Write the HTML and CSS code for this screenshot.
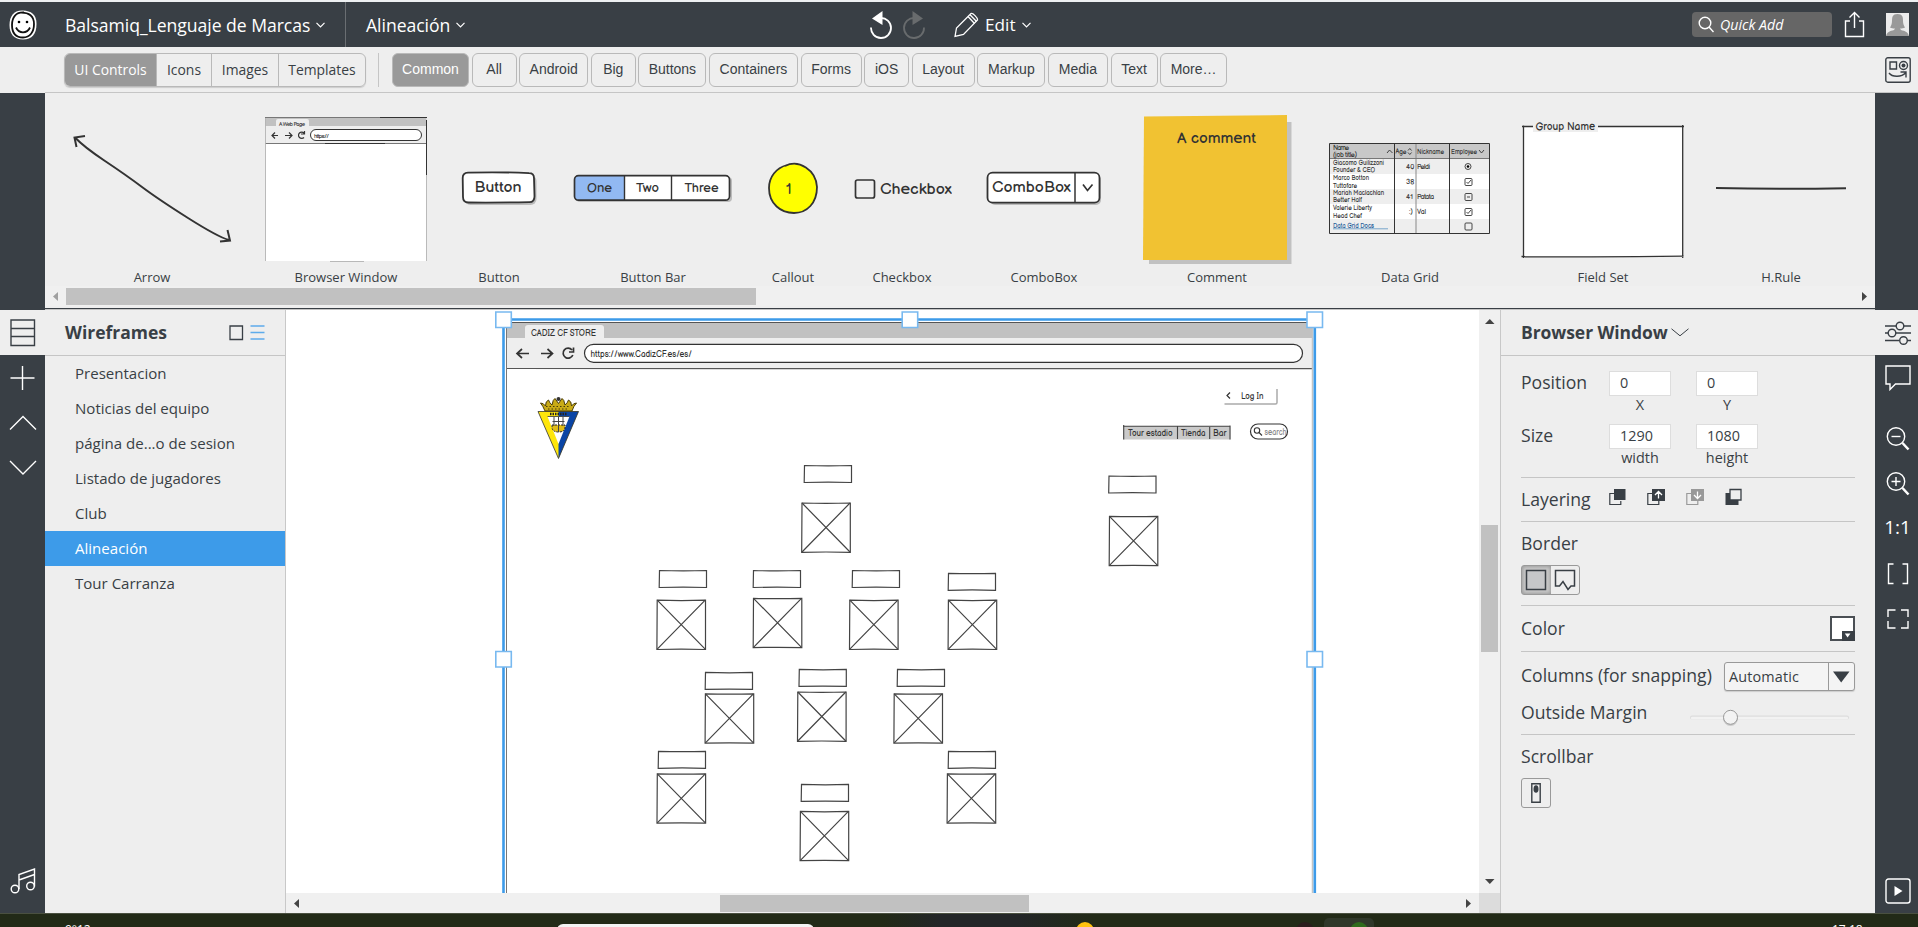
FILE: index.html
```html
<!DOCTYPE html>
<html lang="es">
<head>
<meta charset="utf-8">
<title>Balsamiq_Lenguaje de Marcas</title>
<link rel="stylesheet" href="styles.css">
</head>
<body>
<div class="app">
  <header class="topbar">
    <svg class="logo" width="30" height="32" viewBox="0 0 30 32"><path d="M15 1.500C6 1 1.500 7 1.500 16s4.500 14.500 13.500 14.500S28.500 25 28.500 15 23 2 15 1.500z" fill="#fff"/><path d="M16 3.500C8 3 4 8 4 16s4 12.500 11 12.500S26 23 26 15 21 3.500 13 3.600" fill="none" stroke="#111" stroke-width="1.800"/><path d="M8 18.500c3 6.500 11 6.500 14 0" fill="none" stroke="#111" stroke-width="1.800"/><circle cx="11" cy="13" r="1.300"/><circle cx="19" cy="13" r="1.300"/></svg>
    <div class="menu project"><span>Balsamiq_Lenguaje de Marcas</span><svg width="9" height="6" viewBox="0 0 9 6"><path d="M.5.8l4 4 4-4"/></svg></div>
    <div class="menu board"><span>Alineación</span><svg width="9" height="6" viewBox="0 0 9 6"><path d="M.5.8l4 4 4-4"/></svg></div>
    <div class="tools">
      <svg width="56" height="30" viewBox="0 0 56 30"><g fill="none" stroke="#fff" stroke-width="1.800"><path d="M1 17.500a10 10 0 1 0 9.500-9.500"/></g><path d="M2 8.500L12.500 1V15z" fill="#fff"/><g fill="none" stroke="#686b6d" stroke-width="1.800"><path d="M54 17.500a10 10 0 1 1-9.500-9.500"/></g><path d="M53 8.500L42.500 1V15z" fill="#686b6d"/></svg>
      <svg class="pencil" width="25" height="26" viewBox="0 0 25 26"><g fill="none" stroke="#fff" stroke-width="1.300"><path d="M1 24.500l1.500-8.500L17 1.500c1.500-1 7 4.500 6.500 6.500L9.500 22.500z"/><path d="M14 4.500l6.500 7M16 2.700l6.500 6.800"/></g></svg>
      <div class="menu edit"><span>Edit</span><svg width="9" height="6" viewBox="0 0 9 6"><path d="M.5.8l4 4 4-4"/></svg></div>
    </div>
    <div class="account">
      <div class="quick"><svg width="16" height="17" viewBox="0 0 16 17"><circle cx="7" cy="7" r="5.800"/><path d="M11 11l4.500 5"/></svg><span>Quick Add</span></div>
      <svg class="share" width="22" height="28" viewBox="0 0 22 28"><path d="M6 10H1.500v15.500h18V10H15M10.500 17V2M5.500 6.500l5-5 5 5"/></svg>
      <svg class="avatar" width="23" height="23" viewBox="0 0 23 23"><path fill="#ececec" d="M0 0h23v23H0z"/><path fill="#999" d="M11.500 1C6.500 1 6 4 6 8c0 3-1 5-2 6.500 2 1 4 1.200 5 1L8 17c-4 1-7 2-8 6h23c-1-4-4-5-8-6l-1-1.500c1 .2 3 0 5-1C18 13 17 11 17 8c0-4-.5-7-5.500-7z"/></svg>
    </div>
  </header>

  <nav class="library">
    <div class="segments"><span class="on">UI Controls</span><span>Icons</span><span>Images</span><span>Templates</span></div>
    <i class="vline"></i>
    <div class="cats"><span class="c77 on">Common</span><span class="c45">All</span><span class="c69">Android</span><span class="c45">Big</span><span class="c68">Buttons</span><span class="c89">Containers</span><span class="c61">Forms</span><span class="c45">iOS</span><span class="c63">Layout</span><span class="c68">Markup</span><span class="c60">Media</span><span class="c47">Text</span><span class="c67">More…</span></div>
    <svg class="toggle" width="26" height="26" viewBox="0 0 26 26"><g fill="none" stroke="#393f45" stroke-width="1.400"><rect x=".8" y=".8" width="24.400" height="24.400" rx="2"/><path d="M5 5h6.500v7H5z"/><circle cx="18.500" cy="8.500" r="4"/><path d="M4 16c3 4 12 5 17-.5M15.500 15H21v5.500"/></g><circle cx="18.500" cy="8.500" r="2" fill="#393f45"/></svg>
  </nav>

  <section class="shelf">
    <div class="items">
      <figure class="i-arrow"><svg width="162" height="172" viewBox="71 98 162 172"><path d="M75 137.500Q84 147 105 161T142 187T188 218T229 240M85 136l-10.500 1.500 2 9.500M220 241.500l10-1-2.500-10.500" fill="none" stroke="#333" stroke-width="2"/></svg><figcaption>Arrow</figcaption></figure>
      <figure class="i-browser"><svg width="164" height="172" viewBox="264 98 164 172"><path fill="#fff" d="M265.500 118h161v143h-161z"/><path fill="#c1c1c1" d="M265.500 118h161v8h-161z"/><path fill="#eee" d="M265.500 126h161v17h-161z"/><path fill="#eee" d="M276 127v-6q0-2 2-2h29q2 0 2 2v6z"/><path d="M265 117.500h162M265.500 143.500h161" stroke="#777"/><path d="M380 117.500h47M325 143.500h60M426.500 120v55" stroke="#333"/><path d="M265.500 118v143M426.500 175v86M330 261.500h34" stroke="#aaa" stroke-width=".8"/><rect x="310.500" y="129.500" width="111" height="11" rx="5.500" fill="#fff" stroke="#333"/><g fill="none" stroke="#333" stroke-width="1.200"><path d="M278 135.500h-6m3-3l-3 3 3 3M285 135.500h7m-3-3l3 3-3 3M304 133a3.200 3.200 0 1 0 0 4.500M304.500 131v3H301"/></g><text x="279" y="126" font-size="5.500" textLength="26">A Web Page</text><text x="314" y="137.500" font-size="6" textLength="15">https://</text></svg><figcaption>Browser Window</figcaption></figure>
      <figure class="i-button"><svg width="76" height="172" viewBox="461 98 76 172"><rect x="464.500" y="175" width="72" height="30" rx="6" fill="#bbb"/><path d="M468 172.700q30-1 61 .5 5 0 5 5l.5 18q0 6-5 6-31 .5-61 .3-5.500 0-5.500-5.500l-.3-19q0-5 5.300-5.300z" fill="#fff" stroke="#333" stroke-width="1.800"/><text x="474.500" y="191.500" font-size="15" textLength="47" lengthAdjust="spacingAndGlyphs">Button</text></svg><figcaption>Button</figcaption></figure>
      <figure class="i-bar"><svg width="160" height="172" viewBox="573 98 160 172"><rect x="576" y="177" width="156" height="25" rx="4" fill="#bbb"/><rect x="574.500" y="175.700" width="155" height="24.500" rx="4" fill="#fff"/><path fill="#92b9f2" d="M625 175.700h-46q-4.500 0-4.500 4.500v15.500q0 4.500 4.500 4.500h46z"/><rect x="574.500" y="175.700" width="155" height="24.500" rx="4" fill="none" stroke="#333" stroke-width="1.700"/><path d="M624.500 176v24M671.500 176v24" stroke="#333" stroke-width="1.400"/><g font-size="12.500"><text x="587" y="192" textLength="25" lengthAdjust="spacingAndGlyphs">One</text><text x="636" y="192" textLength="23" lengthAdjust="spacingAndGlyphs">Two</text><text x="684.500" y="192" textLength="34" lengthAdjust="spacingAndGlyphs">Three</text></g></svg><figcaption>Button Bar</figcaption></figure>
      <figure class="i-callout"><svg width="52" height="172" viewBox="767 98 52 172"><path d="M785 166c14-7 31 4 32 21 0 16-10 26-23 26s-25-9-25-25c0-11 7-20 18-23" fill="#ff0" stroke="#333" stroke-width="1.800"/><text x="786" y="194" font-size="14">1</text></svg><figcaption>Callout</figcaption></figure>
      <figure class="i-check"><svg width="100" height="172" viewBox="852 98 100 172"><rect x="855.500" y="180" width="19" height="18" rx="2" fill="none" stroke="#333" stroke-width="1.700"/><text x="880" y="194" font-size="14.500" textLength="72" lengthAdjust="spacingAndGlyphs">Checkbox</text></svg><figcaption>Checkbox</figcaption></figure>
      <figure class="i-combo"><svg width="116" height="172" viewBox="986 98 116 172"><rect x="990" y="175" width="111" height="30" rx="5" fill="#bbb"/><rect x="987.500" y="172.700" width="112" height="30" rx="5" fill="#fff" stroke="#333" stroke-width="1.800"/><path d="M1075 173v29" stroke="#333" stroke-width="1.500"/><path d="M1083 184.500l4.500 6 5-6" fill="none" stroke="#333" stroke-width="1.700"/><text x="992" y="192" font-size="15" textLength="79" lengthAdjust="spacingAndGlyphs">ComboBox</text></svg><figcaption>ComboBox</figcaption></figure>
      <figure class="i-comment"><svg width="150" height="172" viewBox="1142 98 150 172"><path fill="#c1c1c1" d="M1149 122h142.500v142H1149z"/><path fill="#f1c232" d="M1144 116.500l143-1.500v145h-144z"/><text x="1177" y="142.500" font-size="14" textLength="79" lengthAdjust="spacingAndGlyphs">A comment</text></svg><figcaption>Comment</figcaption></figure>
      <figure class="i-grid"><svg width="162" height="172" viewBox="1329 98 162 172"><path fill="#eee" d="M1329.500 143.500h160v90h-160z"/><path fill="#c8c8c8" d="M1329.500 143.500h160v15h-160z"/><path fill="#fff" d="M1329.500 174h160v15h-160zM1329.500 204h160v15h-160z"/><path d="M1416 144v90" stroke="#888"/><path d="M1329.500 158.500h160" stroke="#777"/><path d="M1329.500 143.500h160v90h-160zM1394.500 143.500v90M1449.500 143.500v90" fill="none" stroke="#333"/><g font-size="6.800"><text x="1333" y="149.500" textLength="16">Name</text><text x="1333" y="157" textLength="24">(job title)</text><text x="1333" y="165" textLength="51" lengthAdjust="spacingAndGlyphs">Giacomo Guilizzoni</text><text x="1333" y="172" textLength="42" lengthAdjust="spacingAndGlyphs">Founder &amp; CEO</text><text x="1333" y="180" textLength="36" lengthAdjust="spacingAndGlyphs">Marco Botton</text><text x="1333" y="187.500" textLength="24" lengthAdjust="spacingAndGlyphs">Tuttofare</text><text x="1333" y="195" textLength="51" lengthAdjust="spacingAndGlyphs">Mariah Maclachlan</text><text x="1333" y="202" textLength="29" lengthAdjust="spacingAndGlyphs">Better Half</text><text x="1333" y="210" textLength="39" lengthAdjust="spacingAndGlyphs">Valerie Liberty</text><text x="1333" y="217.500" textLength="29" lengthAdjust="spacingAndGlyphs">Head Chef</text><text class="link" x="1333" y="228" textLength="41" lengthAdjust="spacingAndGlyphs">Data Grid Docs</text><text x="1395.500" y="153.500" textLength="11" lengthAdjust="spacingAndGlyphs">Age</text><text x="1417" y="153.500" textLength="27" lengthAdjust="spacingAndGlyphs">Nickname</text><text x="1451" y="153.500" textLength="26" lengthAdjust="spacingAndGlyphs">Employee</text><text x="1406" y="168.500">40</text><text x="1406" y="183.500">38</text><text x="1406" y="198.500">41</text><text x="1409" y="214">:)</text><text x="1417" y="168.500" textLength="13">Peldi</text><text x="1417" y="198.500" textLength="17">Patata</text><text x="1417" y="214">Val</text></g><path d="M1333 228.800h55" stroke="#5b93c2" stroke-width=".8"/><g fill="none" stroke="#333" stroke-width=".9"><path d="M1387 153l2.500-3 3 3M1408 150.500l1.800-2 1.800 2M1408 152.500l1.800 2 1.800-2M1479 150l2.500 3 2.500-3"/><circle cx="1468" cy="166.500" r="3"/><rect x="1465" y="178.500" width="7" height="7" rx="1"/><rect x="1465" y="193.500" width="7" height="7" rx="1"/><rect x="1465" y="208.500" width="7" height="7" rx="1"/><rect x="1465" y="223" width="7" height="7" rx="1"/><path d="M1466.500 182l1.500 1.500 3-3.500M1467 197h3M1466.500 212l1.500 1.500 3-3.500"/></g><circle cx="1468" cy="166.500" r="1.300"/></svg><figcaption>Data Grid</figcaption></figure>
      <figure class="i-field"><svg width="164" height="172" viewBox="1521 98 164 172"><path fill="#fff" d="M1523.500 126.500h159v130h-159z"/><path d="M1523.500 125.500V258M1522 126.500h162M1682.700 125v133M1521.500 256.500q80 1 162-.3" fill="none" stroke="#333" stroke-width="1.300"/><path fill="#eee" d="M1533 122h65v10h-65z"/><text x="1535.500" y="129.500" font-size="10.500" textLength="59.500" lengthAdjust="spacingAndGlyphs">Group Name</text></svg><figcaption>Field Set</figcaption></figure>
      <figure class="i-rule"><svg width="132" height="172" viewBox="1715 98 132 172"><path d="M1716 188q64 1.500 130 .2" fill="none" stroke="#333" stroke-width="1.900"/></svg><figcaption>H.Rule</figcaption></figure>
    </div>
    <div class="hscroll shelf-scroll"><svg width="21" height="17" viewBox="0 0 21 17"><path d="M8 8.500L13 4v9z" fill="#a0a0a0"/></svg><i class="thumb"></i><svg class="end" width="21" height="17" viewBox="0 0 21 17"><path d="M13 8.500L8 4v9z" fill="#444"/></svg></div>
  </section>

  <main class="work">
    <aside class="rail left">
      <span class="slot on"><svg width="26" height="28" viewBox="0 0 26 28"><path d="M1 1h23.500v25.500H1zM1 9.500h23.500M1 17.500h23.500"/></svg></span>
      <span class="slot"><svg width="26" height="26" viewBox="0 0 26 26"><path d="M12.500 1v24M.5 13h24"/></svg></span>
      <span class="slot"><svg width="28" height="16" viewBox="0 0 28 16"><path d="M1 14.500L14 1.500l13 13"/></svg></span>
      <span class="slot"><svg width="28" height="16" viewBox="0 0 28 16"><path d="M1 1l13 13L27 1"/></svg></span>
      <span class="slot music"><svg width="26" height="26" viewBox="0 0 26 26"><path d="M9 21V6.500L24.500 1v17.500M9 12l15.500-5.500"/><circle cx="5" cy="21" r="3.800"/><circle cx="20.500" cy="18" r="3.800"/></svg></span>
    </aside>
    <section class="wires">
      <div class="wires-head"><h2>Wireframes</h2><svg width="36" height="16" viewBox="0 0 36 16"><path d="M1 1h12.500v13.500H1z" fill="none" stroke="#393f45" stroke-width="1.300"/><path d="M21.500 1h14M21.500 7.500h14M21.500 14h14" stroke="#5dabeb" stroke-width="1.400"/></svg></div>
      <ul><li>Presentacion</li><li>Noticias del equipo</li><li>página de...o de sesion</li><li>Listado de jugadores</li><li>Club</li><li class="on">Alineación</li><li>Tour Carranza</li></ul>
    </section>
    <section class="canvas">
      <svg class="sheet" width="1193" height="583" viewBox="286 310 1193 583">
        <defs>
          <g id="tag" fill="none" stroke="#444" stroke-width="1.200"><path d="M0 0Q24 .8 47 0V17Q24 16.300-.3 17Z"/></g>
          <g id="pic" fill="none" stroke="#444" stroke-width="1.200"><path d="M0 0Q24 .8 48.300 0V49.300Q24 48.700-.3 49.300Z"/><path d="M0 0L48 49M48 0L0 49"/></g>
        </defs>
        <path fill="#c1c1c1" d="M507 323h806v16H507z"/><path fill="#eee" d="M507 338h806v30H507z"/><path fill="#eee" d="M525 339v-11q0-3 3-3h73q3 0 3 3v11z"/>
        <path d="M507 322.500h805M507 368.500q200 .8 350 .2 200 1 455 0" fill="none" stroke="#555" stroke-width="1.200"/>
        <path d="M506.500 322v571" stroke="#777"/><path d="M1312.500 322v571" stroke="#c4c4c4" stroke-width="1.500"/>
        <rect x="584.500" y="344.300" width="718" height="18" rx="9" fill="#fff" stroke="#333" stroke-width="1.200"/>
        <g fill="none" stroke="#333" stroke-width="1.700"><path d="M529 353.500h-12M522 349l-5 4.500 5 4.500M541 353.500h12M547.500 349l5 4.500-5 4.500M572 350a5 5 0 1 0 .8 5M573.500 347.500v4.500H569"/></g>
        <text x="531" y="336" font-size="9.800" textLength="65" lengthAdjust="spacingAndGlyphs">CADIZ CF STORE</text>
        <text x="590.500" y="357" font-size="9.800" textLength="101.500" lengthAdjust="spacingAndGlyphs">https://www.CadizCF.es/es/</text>
        <g><path d="M538 411.500h40.500L558.500 458.500z" fill="#ffe60a"/><path d="M558.500 411.500h20L558.500 458.500z" fill="#0a45a5"/><path d="M547.500 416.500h22L558.500 444z" fill="#fff"/><path d="M538 411.500h40.500L558.500 458.500zM547.500 416.500h22" fill="none" stroke="#333" stroke-width=".8"/><path d="M552 425h13v2q0 5-6.500 5t-6.500-5z" fill="#e0bd18" stroke="#222" stroke-width="1" stroke-dasharray="2 1"/><path d="M554 417v9M558.500 417v15M563 417v9M552.500 421.500h12" stroke="#444"/><path d="M545 411q-2-5-4.500-8 3 0 5 3 0-5 3-6 1 3 3.500 5 1-6 3-6.500l3.500 5 3.500-5q2 .5 3 6.500 2.500-2 3.500-5 3 1 3 6 2-3 5-3-3 3-4.500 8z" fill="#c9ab16" stroke="#4a3d08" stroke-width="1"/><path d="M548 409h21M546 406.500l24 0" stroke="#4a3d08" stroke-dasharray="1.500 2"/><circle cx="558.500" cy="399" r="2" fill="#333"/><path d="M550 414h17" stroke="#222" stroke-width="2.500" stroke-dasharray="1.500 1"/></g>
        <path d="M1224.500 404h51q1.500 0 1.500-1.500V389" fill="none" stroke="#aaa" stroke-width="1.500"/><path d="M1230 392.500l-3 3 3 3" fill="none" stroke="#333" stroke-width="1.200"/><text x="1241" y="398.500" font-size="9.600" textLength="22.500" lengthAdjust="spacingAndGlyphs">Log In</text>
        <path fill="#cacaca" d="M1123.500 426h107v13.500h-107z"/><path d="M1123 426.300h107.500M1123.700 425v14.500M1177.500 426v13M1209.700 427v12M1230 425.500v14" fill="none" stroke="#444" stroke-width="1.100"/>
        <g font-size="9.800"><text x="1128" y="436" textLength="44.500" lengthAdjust="spacingAndGlyphs">Tour estadio</text><text x="1181" y="436" textLength="24.500" lengthAdjust="spacingAndGlyphs">Tienda</text><text x="1213" y="436" textLength="13.500" lengthAdjust="spacingAndGlyphs">Bar</text></g>
        <rect x="1250.500" y="424" width="37" height="15" rx="7.500" fill="#fff" stroke="#333" stroke-width="1.200"/><g fill="none" stroke="#333" stroke-width="1.100"><circle cx="1257" cy="430.500" r="2.700"/><path d="M1259 432.500l3 3"/></g><text class="hint" x="1264.500" y="434.500" font-size="8.600" textLength="22" lengthAdjust="spacingAndGlyphs">search</text>
        <use href="#tag" x="804.500" y="465.500"/><use href="#pic" x="802" y="503"/>
        <use href="#tag" x="1109" y="476"/><use href="#pic" x="1109.500" y="516.300"/>
        <use href="#tag" x="659.500" y="570.500"/><use href="#tag" x="753.500" y="570.500"/><use href="#tag" x="852.500" y="570.500"/><use href="#tag" x="948.500" y="573.300"/>
        <use href="#pic" x="657.200" y="600.200"/><use href="#pic" x="753.500" y="598.300"/><use href="#pic" x="849.800" y="600.200"/><use href="#pic" x="948.400" y="600.200"/>
        <use href="#tag" x="705.500" y="672.400"/><use href="#tag" x="799.300" y="669.400"/><use href="#tag" x="897.500" y="669.400"/>
        <use href="#pic" x="705.400" y="693.800"/><use href="#pic" x="797.800" y="692"/><use href="#pic" x="894.200" y="693.800"/>
        <use href="#tag" x="658.500" y="751.300"/><use href="#tag" x="801.500" y="784.400"/><use href="#tag" x="948.500" y="751.300"/>
        <use href="#pic" x="657.300" y="773.800"/><use href="#pic" x="800.400" y="811.400"/><use href="#pic" x="947.400" y="773.800"/>
        <path d="M503.500 893V319.500H1314.800V893" fill="none" stroke="#3d9be9" stroke-width="2.600"/>
        <g fill="#fff" stroke="#78b9f0" stroke-width="1.600"><path d="M495.800 312h15.500v15.500h-15.500zM902.200 312h15.500v15.500h-15.500zM1307 312h15.500v15.500h-15.500zM495.800 651.500h15.500V667h-15.500zM1307 651.500h15.500V667h-15.500z"/></g>
      </svg>
      <div class="vscroll"><svg width="21" height="21" viewBox="0 0 21 21"><path d="M6 14h9.500l-4.700-5z" fill="#444"/></svg><i class="thumb"></i><svg class="end" width="21" height="21" viewBox="0 0 21 21"><path d="M6 7h9.500l-4.700 5z" fill="#444"/></svg></div>
      <div class="hscroll"><svg width="21" height="20" viewBox="0 0 21 20"><path d="M8 10.500l5-4.500v9z" fill="#444"/></svg><i class="thumb"></i><svg class="end" width="21" height="20" viewBox="0 0 21 20"><path d="M13 10.500L8 6v9z" fill="#444"/></svg></div>
      <i class="corner"></i>
    </section>
    <section class="props">
      <div class="props-head"><h2>Browser Window</h2><svg width="18" height="9" viewBox="0 0 18 9"><path d="M.5.8L9 7.800l8.500-7" fill="none" stroke="#393f45"/></svg></div>
      <div class="props-body">
        <div class="geo g1"><label>Position</label><div><b>0</b><small>X</small></div><div><b>0</b><small>Y</small></div></div>
        <div class="geo g2"><label>Size</label><div><b>1290</b><small>width</small></div><div><b>1080</b><small>height</small></div></div>
        <div class="row layering"><label>Layering</label><svg width="134" height="18" viewBox="0 0 134 18"><g fill="none" stroke="#393f45" stroke-width="1.200"><path d="M5 5.500H.8v11h11V13"/><path d="M43 5.500h-4.200v11h11V13"/><path stroke="#999" d="M82 5.500h-4.200v11h11V13"/></g><path fill="#393f45" d="M5 1h11.500v11H5zM43 1h13v12H43z"/><path fill="#999" d="M82 1h13v12H82z"/><path d="M49.500 10.500V4M46 7l3.500-3.500L53 7M88.500 3.500V10M85 7l3.500 3.500L92 7" fill="none" stroke="#fff" stroke-width="1.300"/><path fill="#393f45" d="M116.500 5h13v12h-13z"/><path fill="#eee" stroke="#393f45" stroke-width="1.300" d="M121 1.500h11v10.500h-11z"/></svg></div>
        <div class="row border"><label>Border</label><div class="pair"><span class="on"><svg width="22" height="22" viewBox="0 0 22 22"><path d="M1.500 1.500h19v19h-19z" fill="#c6c7c9" stroke="#393f45" stroke-width="1.500"/></svg></span><span><svg width="22" height="22" viewBox="0 0 22 22"><path d="M1.500 1.500h19V17h-3.500L14 20.500l-5-8L5.500 17h-4z" fill="none" stroke="#393f45" stroke-width="1.500"/></svg></span></div></div>
        <div class="row color"><label>Color</label><svg width="25" height="25" viewBox="0 0 25 25"><path d="M1 1h23v23H1z" fill="#fff" stroke="#4a4f54" stroke-width="2"/><path fill="#393f45" d="M12 15h13v10H12z"/><path fill="#fff" d="M14.800 17.500h5.600l-2.800 4z"/></svg></div>
        <div class="row columns"><label>Columns (for snapping)</label><div class="select"><span>Automatic</span><svg width="26" height="27" viewBox="0 0 26 27"><path d="M.5 0v27" stroke="#999"/><path d="M5 8.500h16.500L13.200 19.500z" fill="#393f45"/></svg></div></div>
        <div class="row margin"><label>Outside Margin</label><svg width="165" height="20" viewBox="0 0 165 20"><rect x="0" y="8.500" width="159" height="4" rx="2" fill="#dcdcdc"/><rect x="1" y="9.800" width="157" height="2.700" rx="1" fill="#f2f2f2"/><circle cx="40.500" cy="11.500" r="7.500" fill="#ccc"/><circle cx="40.500" cy="10.300" r="7" fill="#f3f3f3" stroke="#999"/></svg></div>
        <div class="row scrollrow"><label>Scrollbar</label><span class="one"><svg width="10" height="20" viewBox="0 0 10 20"><path d="M.8.8h8.400v18.400H.8z" fill="#eee" stroke="#393f45" stroke-width="1.400"/><ellipse cx="5" cy="6" rx="2.500" ry="3.800" fill="#393f45"/></svg></span></div>
      </div>
    </section>
    <aside class="rail right">
      <span class="slot on"><svg width="26" height="26" viewBox="0 0 26 26"><path d="M0 6h11M19 6h7M0 13h3M11 13h15M0 20.500h14M22 20.500h4"/><circle cx="15" cy="6" r="3.800"/><circle cx="7" cy="13" r="3.800"/><circle cx="18.500" cy="20.500" r="3.800"/></svg></span>
      <span class="slot"><svg width="26" height="26" viewBox="0 0 26 26"><path d="M1 1h24v18H10.500L5 24.500V19H1z"/></svg></span>
      <span class="slot first"><svg width="24" height="24" viewBox="0 0 24 24"><circle cx="10" cy="9.500" r="8.700"/><path d="M5.500 9.500h9"/><path d="M16.500 16l6 6.500" stroke-width="2.500"/></svg></span>
      <span class="slot"><svg width="24" height="24" viewBox="0 0 24 24"><circle cx="10" cy="9.500" r="8.700"/><path d="M5.500 9.500h9M10 5v9"/><path d="M16.500 16l6 6.500" stroke-width="2.500"/></svg></span>
      <span class="slot ratio">1:1</span>
      <span class="slot"><svg width="24" height="22" viewBox="0 0 24 22"><path d="M7.500 1H2.500v19.500h5M16.500 1h5v19.500h-5"/></svg></span>
      <span class="slot"><svg width="24" height="20" viewBox="0 0 24 20"><path d="M9.500 1H2v7M15 1h7v7M22 12v7h-7M9.500 19H2v-7"/></svg></span>
      <span class="slot play"><svg width="26" height="26" viewBox="0 0 26 26"><rect x="1" y="1" width="24" height="24" rx="2.500"/><path d="M9.500 8v10l8-5z" fill="#fff" stroke="none"/></svg></span>
    </aside>
  </main>
  <footer class="taskbar">
    <span class="temp">9°12</span><i class="pill"></i><i class="dot yellow"></i><i class="dot face"></i><i class="task"><i class="dot green"></i></i><span class="clock">17:18</span>
  </footer>
</div>
</body>
</html>
```
FILE: styles.css
```css
* { box-sizing: border-box; }
body { margin: 0; font-family: "Open Sans", "Noto Sans", sans-serif; color: #393f45; background: #eee; overflow: hidden; }
svg { display: block; flex: none; }
svg text { font-family: "Balsamiq Sans", Inter, Roboto, sans-serif; fill: #333; }
svg text.hint { fill: #888; }
svg text.link { fill: #1c5b99; }
.app { width: 1918px; height: 927px; display: flex; flex-direction: column; overflow: hidden; }

.topbar { height: 47px; flex: none; background: #393f45; border-top: 2px solid #eef0f2; color: #fff; display: flex; align-items: center; }
.logo { margin: 0 0 0 8px; }
.menu { display: flex; align-items: center; gap: 6px; font-size: 17.6px; white-space: nowrap; }
.project span, .board span { letter-spacing: -0.04px; }
.menu svg path { fill: none; stroke: #fff; stroke-width: 1.2; }
.project { margin-left: 27px; width: 281px; height: 45px; border-right: 1px solid #6a6e72; }
.board { margin-left: 20px; width: 100px; }
.tools { margin-left: 404px; display: flex; align-items: center; }
.pencil { margin: 0 6px 0 28px; }
.edit { font-size: 17.2px; }
.account { margin-left: auto; display: flex; align-items: center; padding-right: 9px; }
.quick { width: 140px; height: 25px; border-radius: 4px; background: #666; display: flex; align-items: center; padding-left: 6px; gap: 6px; font-size: 14.2px; font-style: italic; }
.quick svg, .share { fill: none; stroke: #fff; stroke-width: 1.4; }
.share { margin: 0 20px 0 12px; }

.library { height: 46px; flex: none; margin-left: 45px; background: #eee; display: flex; align-items: flex-start; padding: 6px 7px 0 19px; border-bottom: 1px solid #c5c5c5; }
.segments { display: flex; height: 34px; border: 1px solid #b9b9b9; border-radius: 6px; overflow: hidden; font-size: 13.9px; line-height: 32px; box-shadow: 0 1px 1px #ccc; }
.segments span { text-align: center; border-left: 1px solid #b9b9b9; width: 67px; }
.segments span:nth-child(1) { width: 91px; border: 0; }
.segments span:nth-child(2) { width: 55px; }
.segments span:nth-child(4) { width: 87px; }
.segments .on, .cats .on { background: #999; color: #fff; }
.vline { width: 1px; height: 34px; background: #c5c5c5; margin: 0 13px 0 12px; }
.cats { display: flex; gap: 2.6px; font: 14px "Liberation Sans", Arial, sans-serif; }
.cats span { height: 34px; border: 1px solid #b9b9b9; border-radius: 6px; line-height: 31px; text-align: center; }
.c45 { width: 45px; }
.c47 { width: 47px; }
.c60 { width: 60px; }
.c61 { width: 61px; }
.c63 { width: 63px; }
.c67 { width: 67px; }
.c68 { width: 68px; }
.c69 { width: 69px; }
.c77 { width: 77px; }
.c89 { width: 89px; }
.toggle { margin: 4px 0 0 auto; }

.shelf { height: 217px; flex: none; border: solid #393f45; border-width: 0 43px 0 45px; background: #eee; display: flex; flex-direction: column; box-shadow: inset 0 -1px #c5c5c5, inset 0 -2px #393f45; }
.items { display: flex; padding: 5px 0 0 26px; height: 193px; }
.items figure { margin: 0; display: flex; flex-direction: column; align-items: center; }
.items figcaption { font-size: 13px; line-height: 18px; margin-top: -2px; white-space: nowrap; }
.items .i-browser { margin-left: 31px; }
.items .i-button { margin-left: 33px; }
.items .i-bar { margin-left: 36px; }
.items .i-callout { margin-left: 34px; }
.items .i-check { margin-left: 33px; }
.items .i-combo { margin-left: 34px; }
.items .i-comment { margin-left: 40px; }
.items .i-grid { margin-left: 37px; }
.items .i-field { margin-left: 30px; }
.items .i-rule { margin-left: 30px; }
.hscroll { display: flex; align-items: center; background: #f0f0f0; }
.hscroll .end { margin-left: auto; }
.shelf-scroll { height: 22px; flex: none; padding: 1px 0 0; border-bottom: 2px solid #eee; }
.shelf-scroll .thumb { width: 690px; height: 17px; background: #c1c1c1; }

.work { height: 603px; flex: none; display: flex; }
.rail { background: #393f45; display: flex; flex-direction: column; flex: none; }
.left { width: 45px; }
.right { width: 43px; }
.slot { height: 45px; flex: none; display: flex; align-items: center; justify-content: center; color: #fff; }
.right .slot { padding-left: 2px; }
.slot svg { fill: none; stroke: #fff; stroke-width: 1.4; }
.slot.on { background: #eee; }
.slot.on svg { stroke: #393f45; }
.music { margin: auto 0 10px; }
.play { margin-top: auto; }
.first { margin-top: 16px; }
.ratio { font-size: 19px; line-height: 43px; align-items: flex-start; }
.wires { width: 241px; flex: none; background: #eee; border-right: 1px solid #c8c8c8; }
h2 { margin: 0; font-size: 17.5px; line-height: 45px; }
.wires-head { height: 46px; border-bottom: 1px solid #c5c5c5; display: flex; align-items: center; justify-content: space-between; padding: 0 20px; }
ul { list-style: none; margin: 0; padding: 0; font-size: 15.05px; }
li { height: 35px; line-height: 35px; padding-left: 30px; }
li.on { background: #3d9be9; color: #fff; }

.canvas { width: 1214px; flex: none; display: grid; grid-template: 583px 20px / 1193px 21px; background: #fff; }
.vscroll { background: #f0f0f0; display: flex; flex-direction: column; align-items: flex-start; }
.vscroll .thumb { width: 17px; height: 127px; background: #c1c1c1; margin: 194px 0 0 2px; }
.vscroll .end { margin-top: auto; }
.canvas .hscroll .thumb { width: 309px; height: 17px; background: #c1c1c1; margin-left: 413px; }
.corner { background: #dcdcdc; }

.props { width: 375px; flex: none; background: #eee; border-left: 1px solid #c8c8c8; }
.props-head { height: 46px; border-bottom: 1px solid #c5c5c5; display: flex; align-items: center; padding-left: 20px; gap: 3px; }
.props-head h2 { letter-spacing: -0.07px; }
.props-body { margin: 0 20px; font-size: 17.6px; }
.props-body label { line-height: 24px; white-space: nowrap; }
.geo { display: flex; height: 53px; }
.g1 { margin-top: 15px; }
.g2 { height: 54px; }
.geo label { width: 88px; line-height: 22px; }
.geo div { width: 62px; margin-right: 25px; text-align: center; }
.geo b { display: block; height: 25px; border: 1px solid #ddd; background: #fff; font: 14.4px/22px "Open Sans", sans-serif; text-align: left; padding-left: 10px; }
.geo small { font-size: 14.4px; line-height: 18px; display: block; }
.row { border-top: 1px solid #c5c5c5; display: flex; justify-content: space-between; }
.layering { height: 44px; justify-content: flex-start; margin-top: -1px; padding-top: 10px; }
.layering label { width: 88px; line-height: 22px; }
.border { height: 84px; flex-direction: column; justify-content: flex-start; padding-top: 9px; }
.pair { display: flex; width: 59px; height: 30px; margin-top: 10px; border: 1px solid #999; border-radius: 3px; }
.pair span { width: 29px; display: flex; align-items: center; justify-content: center; }
.pair .on { background: #c9c9c9; box-shadow: inset 0 0 4px #888; }
.color { height: 46px; padding-top: 10px; }
.columns { height: 49px; padding-top: 10px; }
.columns label { line-height: 27px; }
.select { width: 131px; height: 29px; border: 1px solid #999; border-radius: 3px; background: #f4f4f4; display: flex; justify-content: space-between; padding-left: 4px; font-size: 14.4px; line-height: 27px; letter-spacing: 0.15px; box-shadow: 0 1px 1px #ccc; }
.margin { height: 34px; border-top: 0; }
.margin svg { margin-top: 7px; }
.scrollrow { flex-direction: column; padding-top: 9px; }
.one { width: 30px; height: 30px; border: 1px solid #999; border-radius: 3px; margin-top: 10px; display: flex; align-items: center; justify-content: center; }

.taskbar { flex: none; height: 14px; background: linear-gradient(90deg, #222a17 0 46%, #232628 49% 53%, #222a17 57%); border-top: 1px solid #4a5040; display: flex; align-items: flex-start; overflow: hidden; color: #fff; font-size: 12px; line-height: 12px; }
.taskbar i, .taskbar span { flex: none; }
.temp { width: 30px; margin: 10px 0 0 65px; }
.pill { width: 257px; height: 20px; margin: 10px 0 0 462px; border-radius: 6px; background: #f3f3f3; }
.dot { width: 18px; height: 18px; border-radius: 50%; display: block; }
.yellow { margin: 8px 0 0 262px; background: #ffc20e; }
.face { margin: 8px 0 0 202px; background: #2b1d1d; }
.task { width: 50px; height: 30px; margin: 4px 0 0 10px; padding: 4px 0 0 26px; border-radius: 5px; background: #30382a; }
.green { background: #2f6b1c; }
.clock { margin: 10px 0 0 458px; }
```
